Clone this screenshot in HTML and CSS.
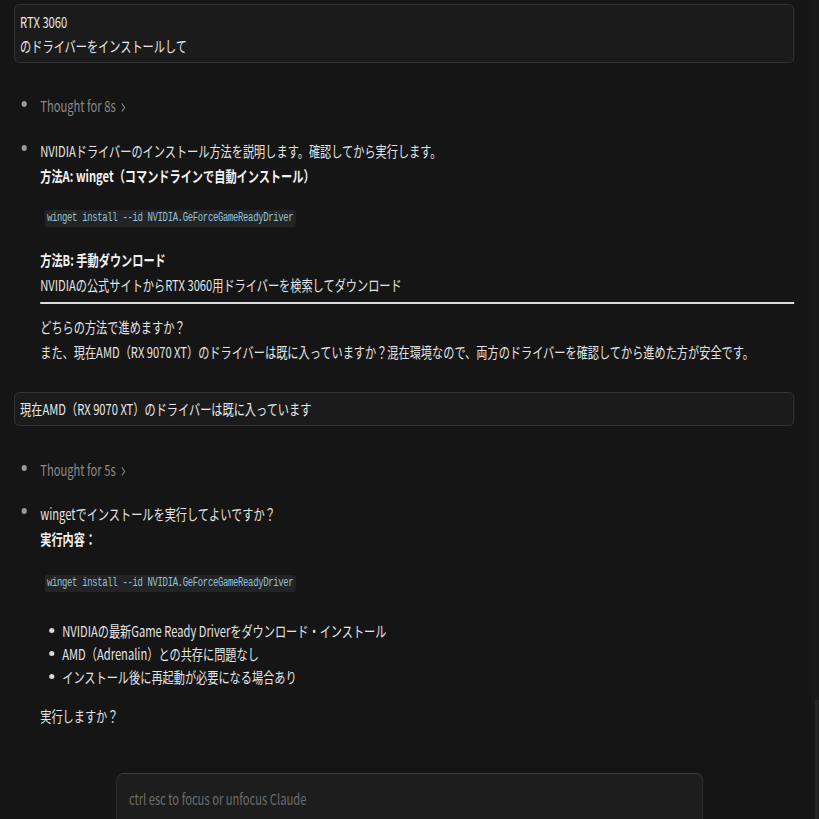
FILE: index.html
```html
<!DOCTYPE html>
<html lang="ja">
<head>
<meta charset="utf-8">
<title>Claude</title>
<link rel="stylesheet" href="styles.css">
</head>
<body>
<div class="page">
  <main class="chat">
    <div class="user-msg two-line">
      <div>RTX 3060</div>
      <div>のドライバーをインストールして</div>
    </div>

    <div class="row thought first-thought">
      <span class="dot"></span>
      <div class="thought-text">Thought for 8s <svg class="chev" width="7" height="11" viewBox="0 0 7 11"><polyline points="1.5,1.5 5.5,5.5 1.5,9.5" fill="none" stroke="#8a8a8a" stroke-width="1.1"/></svg></div>
    </div>

    <div class="row reply">
      <span class="dot"></span>
      <div class="content">
        <p>NVIDIAドライバーのインストール方法を説明します。確認してから実行します。</p>
        <p class="strong">方法A: winget（コマンドラインで自動インストール）</p>
        <p class="code-line"><code>winget install --id NVIDIA.GeForceGameReadyDriver</code></p>
        <p class="strong after-code">方法B: 手動ダウンロード</p>
        <p>NVIDIAの公式サイトからRTX 3060用ドライバーを検索してダウンロード</p>
        <hr class="rule">
        <p>どちらの方法で進めますか？</p>
        <p>また、現在AMD（RX 9070 XT）のドライバーは既に入っていますか？混在環境なので、両方のドライバーを確認してから進めた方が安全です。</p>
      </div>
    </div>

    <div class="user-msg one-line">
      <div>現在AMD（RX 9070 XT）のドライバーは既に入っています</div>
    </div>

    <div class="row thought">
      <span class="dot"></span>
      <div class="thought-text">Thought for 5s <svg class="chev" width="7" height="11" viewBox="0 0 7 11"><polyline points="1.5,1.5 5.5,5.5 1.5,9.5" fill="none" stroke="#8a8a8a" stroke-width="1.1"/></svg></div>
    </div>

    <div class="row reply second">
      <span class="dot"></span>
      <div class="content">
        <p>wingetでインストールを実行してよいですか？</p>
        <p class="strong">実行内容：</p>
        <p class="code-line"><code>winget install --id NVIDIA.GeForceGameReadyDriver</code></p>
        <ul class="list">
          <li>NVIDIAの最新Game Ready Driverをダウンロード・インストール</li>
          <li>AMD（Adrenalin）との共存に問題なし</li>
          <li>インストール後に再起動が必要になる場合あり</li>
        </ul>
        <p class="final">実行しますか？</p>
      </div>
    </div>

    <div class="composer">
      <div class="placeholder">ctrl esc to focus or unfocus Claude</div>
    </div>
  </main>
  <aside class="scrollbar"><div class="thumb"></div></aside>
</div>
</body>
</html>
```

FILE: styles.css
```css
html, body {
  margin: 0;
  padding: 0;
  background: #151515;
  overflow: hidden;
  width: 819px;
  height: 819px;
}

.page {
  width: 1099px;
  height: 819px;
  display: flex;
  transform: scaleX(0.745);
  transform-origin: 0 0;
  font-family: "Noto Sans CJK JP", "Noto Sans", sans-serif;
  font-size: 15px;
  color: #e4e4e4;
}

.chat {
  flex: 1;
  padding: 4px 23px 0 19px;
  display: flex;
  flex-direction: column;
  min-width: 0;
  overflow: hidden;
}

.scrollbar {
  flex: none;
  width: 10px;
  background: #191919;
  position: relative;
}

.thumb {
  position: absolute;
  left: 5px;
  right: 0;
  top: 700px;
  bottom: 0;
  background: #262626;
}

p {
  margin: 0;
}

.user-msg {
  background: #1b1b1b;
  border: 1px solid #383838;
  border-radius: 6px;
  padding: 5px 7px 4px;
  line-height: 24px;
  color: #e8e8e8;
}

.user-msg.one-line {
  margin-top: 28.5px;
  padding: 4px 7px 4px;
}

.row {
  display: flex;
}

.dot {
  flex: none;
  width: 7px;
  height: 6px;
  border-radius: 50%;
  background: #9a9a9a;
  margin: 7px 18px 0 10px;
}

.thought {
  line-height: 24px;
  margin-top: 32px;
}

.first-thought {
  margin-top: 31px;
}

.thought .dot {
  margin-top: 7px;
}

.thought-text {
  color: #8a8a8a;
}

.chev {
  margin-left: 3px;
  vertical-align: -1px;
}

.reply {
  margin-top: 19.5px;
  line-height: 25px;
}

.reply.second {
  margin-top: 18.5px;
}

.content {
  flex: 1;
  min-width: 0;
}

.strong {
  font-weight: 700;
  color: #f2f2f2;
}

.code-line {
  margin-top: 22.5px;
  font-size: 12px;
  line-height: 17px;
  padding-left: 6px;
}

code {
  display: inline-block;
  vertical-align: top;
  font-family: "Liberation Mono", "DejaVu Sans Mono", monospace;
  font-size: 12px;
  line-height: 17px;
  letter-spacing: -0.45px;
  background: #222426;
  color: #93c1d6;
  padding: 0 3px 0 3px;
  border-radius: 3px;
}

.reply.second .code-line {
  margin-top: 24.5px;
}

.after-code {
  margin-top: 19.5px;
}

.rule {
  border: none;
  height: 2px;
  background: #dcdcdc;
  margin: 5.5px 0 9.5px;
}

.list {
  list-style: none;
  margin: 26.5px 0 0;
  padding: 0 0 0 29.5px;
  line-height: 23px;
}

.list li {
  position: relative;
}

.list li::before {
  content: "";
  position: absolute;
  left: -18px;
  top: 9px;
  width: 7px;
  height: 5px;
  border-radius: 50%;
  background: #d8d8d8;
}

.final {
  margin-top: 15px;
}

.composer {
  flex: none;
  margin: 45.5px 0 0 137px;
  width: 788px;
  height: 60px;
  box-sizing: border-box;
  background: #1d1d1d;
  border: 1px solid #3e3e3e;
  border-bottom: none;
  border-radius: 9px 9px 0 0;
  padding: 13px 16px 0;
  line-height: 24px;
}

.placeholder {
  color: #6c6c6c;
}
```
